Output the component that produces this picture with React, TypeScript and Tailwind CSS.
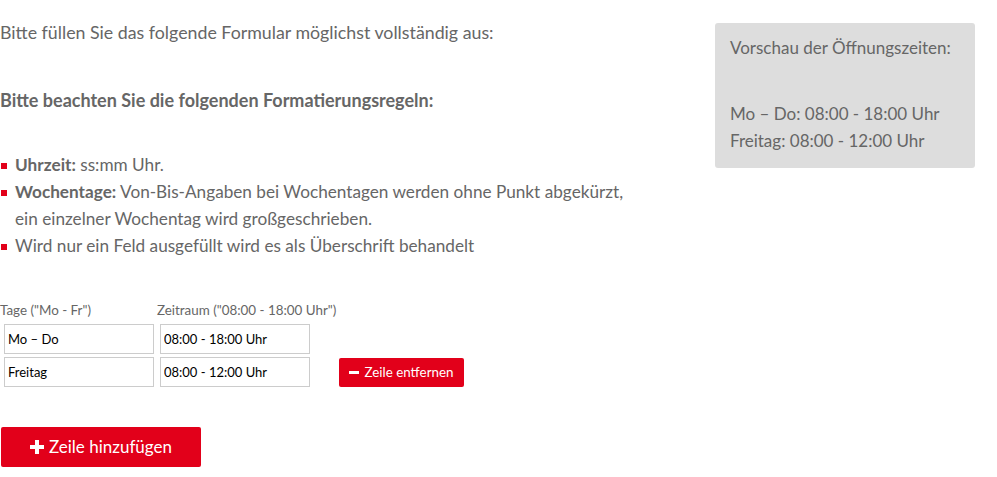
import { useState } from "react";

type Row = { id: number; days: string; time: string };

const rules = [
  { label: "Uhrzeit:", text: " ss:mm Uhr." },
  {
    label: "Wochentage:",
    text: " Von-Bis-Angaben bei Wochentagen werden ohne Punkt abgekürzt, ein einzelner Wochentag wird großgeschrieben.",
  },
  { label: "", text: "Wird nur ein Feld ausgefüllt wird es als Überschrift behandelt" },
];

const App = () => {
  const [rows, setRows] = useState<Row[]>([
    { id: 1, days: "Mo – Do", time: "08:00 - 18:00 Uhr" },
    { id: 2, days: "Freitag", time: "08:00 - 12:00 Uhr" },
  ]);

  const update = (id: number, key: "days" | "time", value: string) => {
    setRows(rows.map((r) => (r.id === id ? { ...r, [key]: value } : r)));
  };

  return (
    <div className="flex w-[997px] gap-[40px] bg-white font-['Lato',sans-serif] text-[#666]">
      <div className="w-[675px] shrink-0">
        <p className="mt-[20px] text-[17.8px] leading-[24px]">
          Bitte füllen Sie das folgende Formular möglichst vollständig aus:
        </p>
        <p className="mt-[44px] text-[18px] font-bold leading-[24px]">
          Bitte beachten Sie die folgenden Formatierungsregeln:
        </p>
        <ul className="mt-[39px] w-[640px]">
          {rules.map((rule, index) => (
            <li key={index} className="relative pl-[15px] text-[17.2px] leading-[27px]">
              <span className="absolute left-[1px] top-[12px] h-[6px] w-[6px] bg-[#e2001a]" />
              {rule.label && <b className="font-bold">{rule.label}</b>}
              {rule.text}
            </li>
          ))}
        </ul>

        <div className="mt-[43px] flex gap-[3px] text-[13.4px] leading-[16px]">
          <span className="w-[154px]">Tage ("Mo - Fr")</span>
          <span>Zeitraum ("08:00 - 18:00 Uhr")</span>
        </div>
        <div className="mt-[6px] flex flex-col gap-[3px] pl-[4px]">
          {rows.map((row, index) => (
            <div key={row.id} className="flex items-center gap-[6px]">
              <input
                value={row.days}
                onChange={(e) => update(row.id, "days", e.target.value)}
                className="h-[30px] w-[150px] border border-[#ccc] px-[3px] text-[13px] text-black outline-none"
              />
              <input
                value={row.time}
                onChange={(e) => update(row.id, "time", e.target.value)}
                className="h-[30px] w-[150px] border border-[#ccc] px-[3px] text-[13px] text-black outline-none"
              />
              {index === rows.length - 1 && rows.length > 1 && (
                <button
                  onClick={() => setRows(rows.filter((r) => r.id !== row.id))}
                  className="ml-[23px] flex h-[29px] w-[125px] items-center justify-center gap-[5px] rounded-[2px] bg-[#e2001a] text-[13.4px] text-white"
                >
                  <span className="h-[3px] w-[10px] bg-white" />
                  Zeile entfernen
                </button>
              )}
            </div>
          ))}
        </div>

        <button
          onClick={() =>
            setRows([...rows, { id: Date.now(), days: "", time: "" }])
          }
          className="ml-[1px] mt-[40px] flex h-[40px] w-[200px] items-center justify-center gap-[5px] rounded-[2px] bg-[#e2001a] text-[17px] text-white"
        >
          <svg width="14" height="14" viewBox="0 0 14 14">
            <path d="M5 0h4v5h5v4H9v5H5V9H0V5h5z" fill="white" />
          </svg>
          Zeile hinzufügen
        </button>
      </div>

      <div className="mt-[23px] h-[145px] w-[260px] shrink-0 rounded-[3px] bg-[#ddd] px-[15px] pt-[11px] text-[17px] leading-[27px]">
        <p>Vorschau der Öffnungszeiten:</p>
        <p className="mt-[39px]">
          {rows.map((row) => (
            <span key={row.id} className="block">
              {row.days}: {row.time}
            </span>
          ))}
        </p>
      </div>
    </div>
  );
};

export default App;
